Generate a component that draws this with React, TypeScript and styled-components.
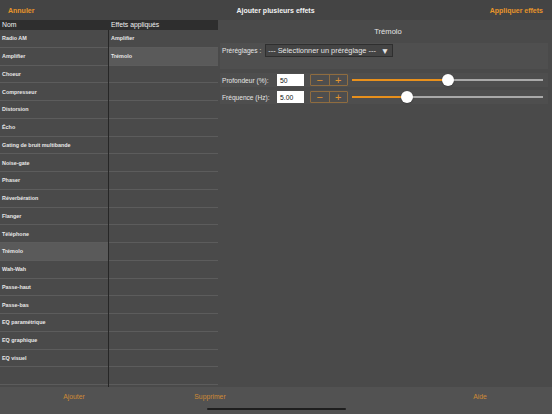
import React from "react";
import styled, { createGlobalStyle } from "styled-components";

const GlobalStyle = createGlobalStyle`
  html, body {
    margin: 0;
    padding: 0;
    background: #4a4a4a;
  }
  body {
    font-family: "Liberation Sans", Arial, sans-serif;
    -webkit-font-smoothing: antialiased;
  }
`;

const effects = [
  "Radio AM",
  "Amplifier",
  "Choeur",
  "Compresseur",
  "Distorsion",
  "Écho",
  "Gating de bruit multibande",
  "Noise-gate",
  "Phaser",
  "Réverbération",
  "Flanger",
  "Téléphone",
  "Trémolo",
  "Wah-Wah",
  "Passe-haut",
  "Passe-bas",
  "EQ paramétrique",
  "EQ graphique",
  "EQ visuel",
  "",
];

const applied = ["Amplifier", "Trémolo"];

const Screen = styled.div`
  width: 552px;
  height: 414px;
  display: flex;
  flex-direction: column;
  background: #4a4a4a;
  overflow: hidden;
`;

const TopBar = styled.div`
  height: 20px;
  flex: none;
  display: grid;
  grid-template-columns: 1fr auto 1fr;
  align-items: center;
  padding: 0 9px 0 8px;
  background: #444444;
`;

const BarButton = styled.span<{ $align?: string }>`
  color: #e8952a;
  font-size: 7px;
  font-weight: 600;
  justify-self: ${({ $align }) => $align || "start"};
`;

const Title = styled.span`
  color: #f2f2f2;
  font-size: 7px;
  font-weight: 600;
`;

const Main = styled.div`
  flex: 1;
  display: flex;
  min-height: 0;
`;

const Lists = styled.div`
  width: 218px;
  flex: none;
  display: flex;
  flex-direction: column;
`;

const HeaderRow = styled.div`
  height: 10px;
  display: grid;
  grid-template-columns: 108px 1px 109px;
  background: #2e2e2e;
  color: #f0f0f0;
  font-size: 6.8px;
  line-height: 10px;
`;

const HeaderCell = styled.span`
  padding-left: 2px;
`;

const Columns = styled.div`
  flex: 1;
  display: grid;
  grid-template-columns: 108px 1px 109px;
`;

const Divider = styled.div`
  background: #262626;
`;

const Column = styled.div`
  display: flex;
  flex-direction: column;
`;

const Row = styled.div<{ $selected?: boolean }>`
  height: 17.75px;
  box-sizing: border-box;
  display: flex;
  align-items: center;
  padding-left: 2px;
  border-bottom: 1px solid #5c5c5c;
  background: ${({ $selected }) => ($selected ? "#5a5a5a" : "transparent")};
  color: #e8e8e8;
  font-size: 5.4px;
  font-weight: 600;
  white-space: nowrap;
`;

const Panel = styled.div`
  flex: 1;
  display: flex;
  flex-direction: column;
  padding: 0 4px 0 2px;
`;

const PanelTitle = styled.div`
  height: 23px;
  display: flex;
  align-items: center;
  justify-content: center;
  padding-left: 8px;
  color: #e4e4e4;
  font-size: 7.6px;
`;

const PresetBand = styled.div`
  height: 25px;
  background: #4f4f4f;
  display: flex;
  align-items: flex-start;
  padding: 1px 2px 0;
  gap: 4px;
`;

const Label = styled.span<{ $width?: number }>`
  color: #e6e6e6;
  font-size: 6.6px;
  line-height: 13px;
  width: ${({ $width }) => ($width ? `${$width}px` : "auto")};
  flex: none;
`;

const Select = styled.div`
  height: 13px;
  width: 128px;
  box-sizing: border-box;
  border: 1px solid #2f2f2f;
  background: #444444;
  color: #e6e6e6;
  font-size: 7.4px;
  display: flex;
  align-items: center;
  padding: 0 2px;
  gap: 4px;
  white-space: nowrap;
`;

const Arrow = styled.span`
  margin-left: auto;
  margin-right: 1px;
  font-size: 8.5px;
  color: #e6e6e6;
`;

const Params = styled.div`
  display: flex;
  flex-direction: column;
  gap: 3px;
  margin-top: 4px;
`;

const ParamRow = styled.div`
  height: 14px;
  background: #4e4e4e;
  display: flex;
  align-items: center;
  padding: 0 2px;
`;

const ValueBox = styled.div`
  width: 27px;
  height: 12px;
  box-sizing: border-box;
  background: #ffffff;
  color: #111;
  font-size: 6.8px;
  display: flex;
  align-items: center;
  padding-left: 3px;
  margin-left: 2px;
`;

const Stepper = styled.div`
  margin-left: 6px;
  width: 38px;
  height: 12px;
  box-sizing: border-box;
  border: 1px solid #8f6c3f;
  border-radius: 1px;
  display: grid;
  grid-template-columns: 1fr 1px 1fr;
`;

const StepButton = styled.span`
  display: flex;
  align-items: center;
  justify-content: center;
  color: #e0922e;
  font-size: 11px;
  font-weight: 300;
  line-height: 1;
`;

const StepDivider = styled.span`
  background: #8f6c3f;
`;

const Slider = styled.div`
  flex: 1;
  margin: 0 3px 0 4px;
  height: 14px;
  position: relative;
`;

const Track = styled.div`
  position: absolute;
  left: 0;
  right: 0;
  top: 6.25px;
  height: 1.5px;
  background: #a9a9a9;
`;

const Fill = styled.div`
  position: absolute;
  left: 0;
  top: 6.25px;
  height: 1.5px;
  background: #e8901c;
`;

const Thumb = styled.div`
  position: absolute;
  top: 1px;
  width: 12px;
  height: 12px;
  margin-left: -6px;
  border-radius: 50%;
  background: #ffffff;
  box-shadow: 0 0.5px 1.5px rgba(0, 0, 0, 0.35);
`;

const Footer = styled.div`
  height: 27px;
  flex: none;
  background: #525252;
  display: grid;
  grid-template-columns: 148px 124px 1fr;
  position: relative;
`;

const FooterButton = styled.span<{ $pad?: number }>`
  color: #cf8a35;
  font-size: 6.8px;
  padding-top: 6px;
  text-align: center;
  padding-left: ${({ $pad }) => ($pad ? `${$pad}px` : "0")};
`;

const HomeIndicator = styled.div`
  position: absolute;
  left: 207px;
  bottom: 4px;
  width: 139px;
  height: 2.5px;
  border-radius: 2px;
  background: #1e1e1e;
`;

const ParamSlider = ({ label, value, ratio }: { label: string; value: string; ratio: number }) => (
  <ParamRow>
    <Label $width={53}>{label}</Label>
    <ValueBox>{value}</ValueBox>
    <Stepper>
      <StepButton>−</StepButton>
      <StepDivider />
      <StepButton>+</StepButton>
    </Stepper>
    <Slider>
      <Track />
      <Fill style={{ width: `${ratio * 100}%` }} />
      <Thumb style={{ left: `${ratio * 100}%` }} />
    </Slider>
  </ParamRow>
);

const App = () => {
  return (
    <Screen>
      <GlobalStyle />
      <TopBar>
        <BarButton>Annuler</BarButton>
        <Title>Ajouter plusieurs effets</Title>
        <BarButton $align="end">Appliquer effets</BarButton>
      </TopBar>
      <Main>
        <Lists>
          <HeaderRow>
            <HeaderCell>Nom</HeaderCell>
            <span />
            <HeaderCell>Effets appliqués</HeaderCell>
          </HeaderRow>
          <Columns>
            <Column>
              {effects.map((name, i) => (
                <Row key={i} $selected={name === "Trémolo"}>
                  {name}
                </Row>
              ))}
            </Column>
            <Divider />
            <Column>
              {effects.map((_, i) => (
                <Row key={i} $selected={i === 1}>
                  {applied[i] || ""}
                </Row>
              ))}
            </Column>
          </Columns>
        </Lists>
        <Panel>
          <PanelTitle>Trémolo</PanelTitle>
          <PresetBand>
            <Label>Préréglages :</Label>
            <Select>
              <span>--- Sélectionner un préréglage ---</span>
              <Arrow>▼</Arrow>
            </Select>
          </PresetBand>
          <Params>
            <ParamSlider label="Profondeur (%):" value="50" ratio={0.5} />
            <ParamSlider label="Fréquence (Hz):" value="5.00" ratio={0.29} />
          </Params>
        </Panel>
      </Main>
      <Footer>
        <FooterButton>Ajouter</FooterButton>
        <FooterButton>Supprimer</FooterButton>
        <FooterButton $pad={136}>Aide</FooterButton>
        <HomeIndicator />
      </Footer>
    </Screen>
  );
};

export default App;
